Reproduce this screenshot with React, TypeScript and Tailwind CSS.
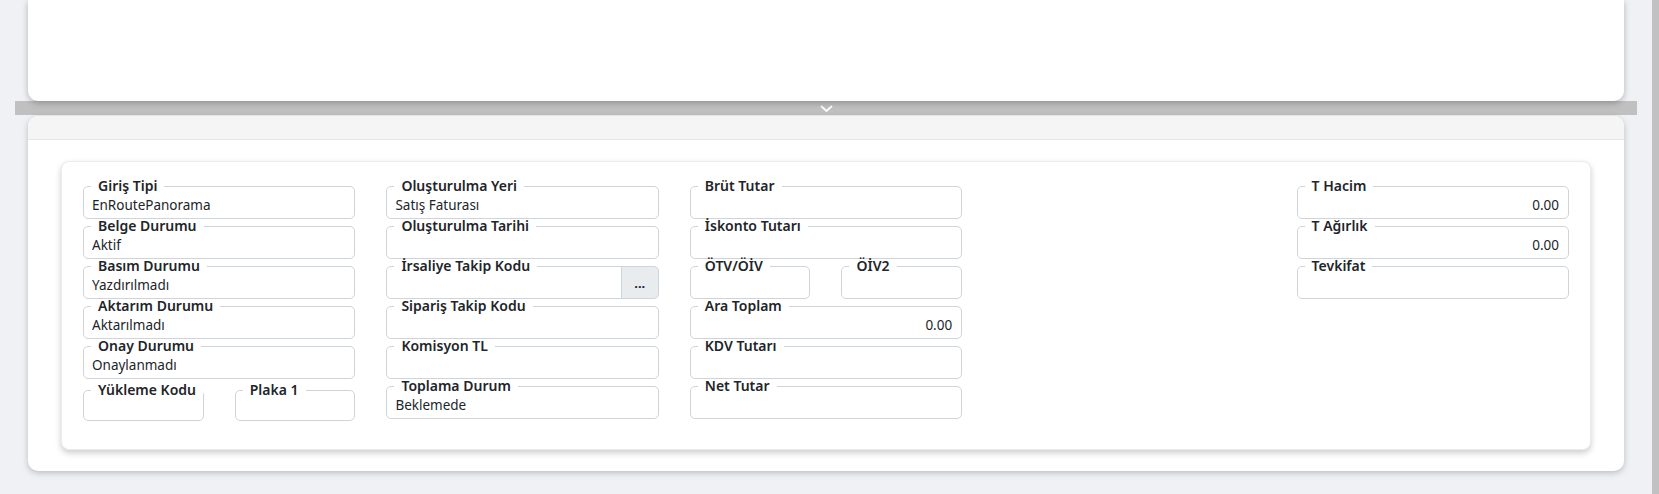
import React from 'react';

type Field = {
  label: string;
  value?: string;
  right?: boolean;
};

function Box({ label, value, right, short, className }: Field & { short?: boolean; className?: string }) {
  return (
    <fieldset
      className={`min-w-0 border border-[#ced4da] rounded-[5px] px-[8px] pb-[1px] ${className ?? ''}`}
    >
      <legend className="ml-[-1px] whitespace-nowrap px-[7px] text-[14px] leading-[14px] font-semibold text-[#212529]">
        {label}
      </legend>
      <div
        className={`${short ? 'h-[22px]' : 'h-[24px]'} text-[13.5px] leading-[24px] text-[#212529] whitespace-nowrap overflow-hidden ${
          right ? 'text-right pr-[1px]' : ''
        }`}
      >
        {value}
      </div>
    </fieldset>
  );
}

function PickerBox({ label }: { label: string }) {
  return (
    <div className="flex items-start">
      <Box label={label} className="flex-1 rounded-r-none" />
      <button
        type="button"
        className="mt-[7px] -ml-px h-[33px] w-[38px] shrink-0 rounded-r-[5px] border border-[#ced4da] bg-[#e9ecef] text-[13px] font-bold leading-[20px] text-[#212529]"
      >
        ...
      </button>
    </div>
  );
}

export default function App() {
  return (
    <div className="flex h-[494px] w-[1659px] overflow-hidden bg-[#f0f1f5] font-['Noto_Sans',sans-serif]">
      <div className="w-[1652px] px-[15px]">
        {/* upper panel */}
        <div className="relative z-10 mx-[13px] h-[101px] rounded-b-[10px] bg-white shadow-[0_2px_6px_rgba(0,0,0,0.25)]" />

        {/* splitter */}
        <div className="flex h-[14px] items-center justify-center bg-[#c0c0c0]">
          <svg width="13" height="8" viewBox="0 0 13 8" className="mt-[1px]">
            <polyline points="1,1 6.5,6 12,1" fill="none" stroke="#ffffff" strokeWidth="1.7" />
          </svg>
        </div>

        {/* lower panel */}
        <div className="mx-[13px] mt-[1px] rounded-[10px] bg-white shadow-[0_2px_6px_rgba(0,0,0,0.22)]">
          <div className="h-[24px] rounded-t-[10px] border-b border-[#e6e6e6] bg-[#f5f5f5]" />
          <div className="px-[33px] pt-[21px] pb-[21px]">
            <div className="rounded-[8px] border border-[#ebebf0] bg-white px-[21px] pt-[17px] pb-[28px] shadow-[0_3px_6px_rgba(0,0,0,0.2)]">
              <div className="grid grid-cols-5 items-start gap-x-[31px]">
                {/* col 1 */}
                <div className="flex flex-col">
                  <Box label="Giriş Tipi" value="EnRoutePanorama" />
                  <Box label="Belge Durumu" value="Aktif" />
                  <Box label="Basım Durumu" value="Yazdırılmadı" />
                  <Box label="Aktarım Durumu" value="Aktarılmadı" />
                  <Box label="Onay Durumu" value="Onaylanmadı" />
                  <div className="mt-[4px] grid grid-cols-2 gap-x-[31px]">
                    <Box label="Yükleme Kodu" short />
                    <Box label="Plaka 1" short />
                  </div>
                </div>

                {/* col 2 */}
                <div className="flex flex-col">
                  <Box label="Oluşturulma Yeri" value="Satış Faturası" />
                  <Box label="Oluşturulma Tarihi" />
                  <PickerBox label="İrsaliye Takip Kodu" />
                  <Box label="Sipariş Takip Kodu" />
                  <Box label="Komisyon TL" />
                  <Box label="Toplama Durum" value="Beklemede" />
                </div>

                {/* col 3 */}
                <div className="flex flex-col">
                  <Box label="Brüt Tutar" />
                  <Box label="İskonto Tutarı" />
                  <div className="grid grid-cols-2 gap-x-[31px]">
                    <Box label="ÖTV/ÖİV" />
                    <Box label="ÖİV2" />
                  </div>
                  <Box label="Ara Toplam" value="0.00" right />
                  <Box label="KDV Tutarı" />
                  <Box label="Net Tutar" />
                </div>

                {/* col 4 - empty */}
                <div />

                {/* col 5 */}
                <div className="flex flex-col">
                  <Box label="T Hacim" value="0.00" right />
                  <Box label="T Ağırlık" value="0.00" right />
                  <Box label="Tevkifat" />
                </div>
              </div>
            </div>
          </div>
        </div>
      </div>

      {/* scrollbar */}
      <div className="h-full w-[7px] bg-[#c1c1c1]" />
    </div>
  );
}
